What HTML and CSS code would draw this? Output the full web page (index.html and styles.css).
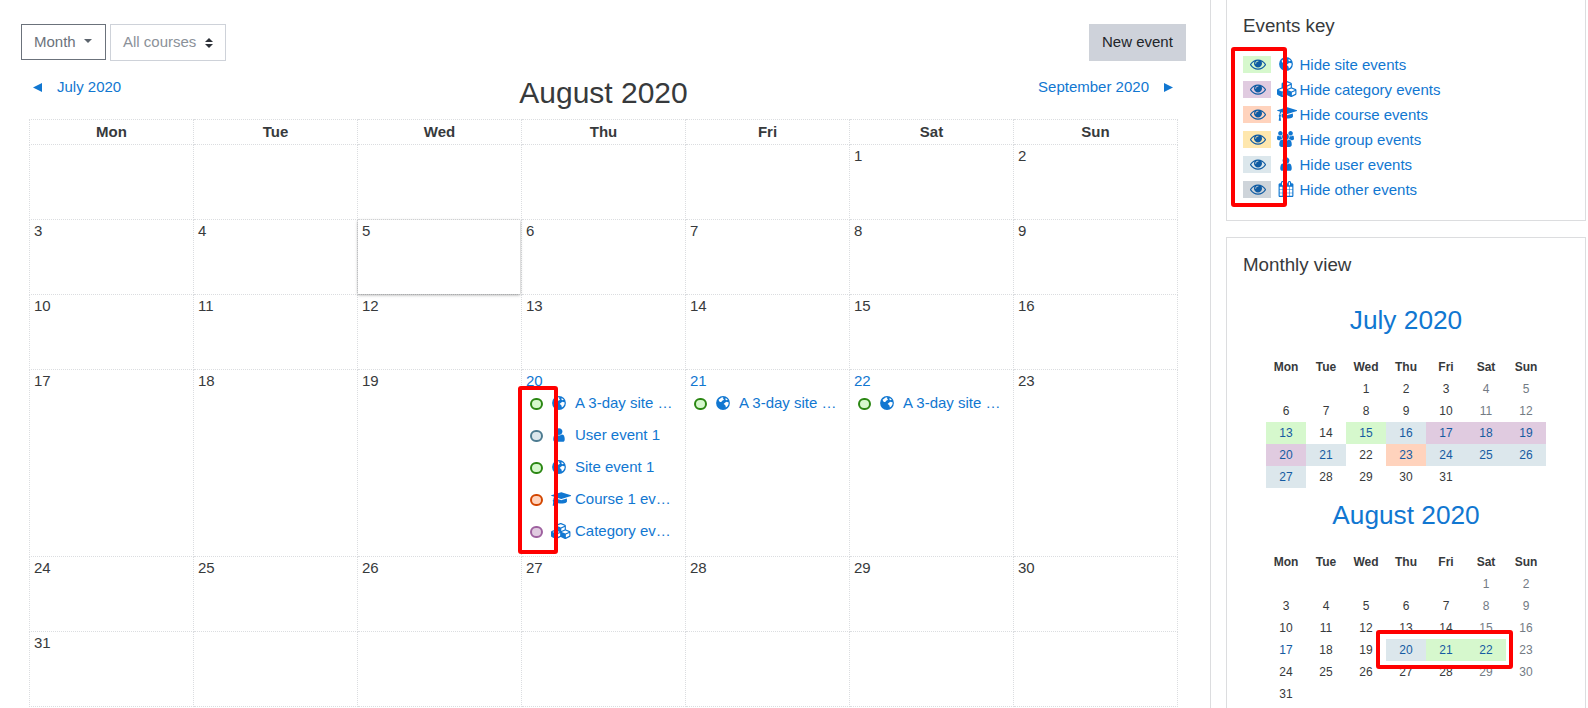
FILE: index.html
```html
<!DOCTYPE html>
<html lang="en">
  <head>
    <meta charset="UTF-8">
    <meta name="viewport" content="width=device-width, initial-scale=1.0">
    <title>Calendar: August 2020</title>
    <link rel="stylesheet" href="styles.css">
  </head>
  <body>
    <svg class="sprite">
      <symbol id="eye" viewBox="0 0 1792 1792"><path d="M1664 960q-152-236-381-353 61 104 61 225 0 185-131.5 316.5t-316.5 131.5-316.5-131.5-131.5-316.5q0-121 61-225-229 117-381 353 133 205 333.5 326.5t434.5 121.5 434.5-121.5 333.5-326.5zm-720-384q0-20-14-34t-34-14q-125 0-214.5 89.5t-89.5 214.5q0 20 14 34t34 14 34-14 14-34q0-86 61-147t147-61q20 0 34-14t14-34zm848 384q0 34-20 69-140 230-376.5 368.5t-499.5 138.5-499.5-139-376.5-368q-20-35-20-69t20-69q140-229 376.5-368t499.5-139 499.5 139 376.5 368q20 35 20 69z"/></symbol>
      <symbol id="globe" viewBox="0 0 16 16"><path fill-rule="evenodd" d="M8 1.1a6.9 6.9 0 1 0 0 13.8a6.9 6.9 0 1 0 0-13.8zM6.6 2.5l1.700-.2-.4 1.200 1 .4-.3 1-1.400.8-.9 1.300-1.200.1-.9-.9-.6-1.500zM10.400 3.200l1.500.5.8 1.100-1.100.4-1.200-.7zM10.200 7.400l1.400-.6 2.100.8-.3 2-1.200 1.900-1.400 1-.2-1.700-1.100-1.200-.9-.7z"/></symbol>
      <symbol id="user" viewBox="0 0 1792 1792"><path d="M1536 1399q0 109-62.5 187t-150.5 78h-854q-88 0-150.5-78t-62.5-187q0-85 8.5-160.5t31.5-152 58.5-131 94-89 134.5-34.5q131 128 313 128t313-128q76 0 134.5 34.5t94 89 58.5 131 31.5 152 8.5 160.5zm-256-887q0 159-112.5 271.5t-271.5 112.5-271.5-112.5-112.5-271.5 112.5-271.5 271.5-112.5 271.5 112.5 112.5 271.5z"/></symbol>
      <symbol id="group" viewBox="64 0 1920 1792"><path d="M657 896q-162 5-265 128h-134q-82 0-138-40.5t-56-118.5q0-353 124-353 6 0 43.5 21t97.5 42.5 119 21.5q67 0 133-23-5 37-5 66 0 139 81 256zm1071 637q0 120-73 189.5t-194 69.5h-874q-121 0-194-69.5t-73-189.5q0-53 3.5-103.5t14-109 26.5-108.5 43-97.5 62-81 85.5-53.5 111.5-20q10 0 43 21.5t73 48 107 48 135 21.5 135-21.5 107-48 73-48 43-21.5q61 0 111.5 20t85.5 53.5 62 81 43 97.5 26.5 108.5 14 109 3.5 103.5zm-1024-1277q0 106-75 181t-181 75-181-75-75-181 75-181 181-75 181 75 75 181zm704 384q0 159-112.5 271.5t-271.5 112.5-271.5-112.5-112.5-271.5 112.5-271.5 271.5-112.5 271.5 112.5 112.5 271.5zm576 225q0 78-56 118.5t-138 40.5h-134q-103-123-265-128 81-117 81-256 0-29-5-66 66 23 133 23 59 0 119-21.5t97.5-42.5 43.5-21q124 0 124 353zm-128-609q0 106-75 181t-181 75-181-75-75-181 75-181 181-75 181 75 75 181z"/></symbol>
      <symbol id="course" viewBox="0 0 2304 1792"><path d="M1774 836l18 316q4 69-82 128t-235 93.5-323 34.5-323-34.5-235-93.5-82-128l18-316 574 181q22 7 48 7t48-7zm530-324q0 23-22 31l-1120 352q-4 1-10 1t-10-1l-652-206q-43 34-71 111.5t-34 178.5q63 36 63 109 0 69-58 107l58 433q2 14-8 25-9 11-24 11h-192q-15 0-24-11-10-11-8-25l58-433q-58-38-58-107 0-73 65-111 11-207 98-330l-333-104q-22-8-22-31t22-31l1120-352q4-1 10-1t10 1l1120 352q22 8 22 31z"/></symbol>
      <symbol id="category" viewBox="0 0 2304 1792"><path d="M640 1632l384-192v-314l-384 164v342zm-64-454l404-173-404-173-404 173zm1088 454l384-192v-314l-384 164v342zm-64-454l404-173-404-173-404 173zm-448-293l384-165v-266l-384 164v267zm-64-379l441-189-441-189-441 189zm1088 518v416q0 36-19 67t-52 47l-448 224q-25 14-57 14t-57-14l-448-224q-5-2-7-4-2 2-7 4l-448 224q-25 14-57 14t-57-14l-448-224q-33-16-52-47t-19-67v-416q0-38 21.5-70t56.5-48l434-186v-400q0-38 21.5-70t56.5-48l448-192q23-10 50-10t50 10l448 192q35 16 56.5 48t21.5 70v400l434 186q36 16 57 48t21 70z"/></symbol>
      <symbol id="other" viewBox="0 0 1792 1792"><path d="M192 1664h288v-288h-288v288zm352 0h320v-288h-320v288zm-352-352h288v-320h-288v320zm352 0h320v-320h-320v320zm-352-384h288v-288h-288v288zm736 736h320v-288h-320v288zm-384-736h320v-288h-320v288zm768 736h288v-288h-288v288zm-384-352h320v-320h-320v320zm-352-864v-288q0-13-9.5-22.5t-22.5-9.5h-64q-13 0-22.5 9.5t-9.5 22.5v288q0 13 9.5 22.5t22.5 9.5h64q13 0 22.5-9.5t9.5-22.5zm736 864h288v-320h-288v320zm-384-384h320v-288h-320v288zm384 0h288v-288h-288v288zm32-480v-288q0-13-9.5-22.5t-22.5-9.5h-64q-13 0-22.5 9.5t-9.5 22.5v288q0 13 9.5 22.5t22.5 9.5h64q13 0 22.5-9.5t9.5-22.5zm384-64v1280q0 52-38 90t-90 38h-1408q-52 0-90-38t-38-90v-1280q0-52 38-90t90-38h128v-96q0-66 47-113t113-47h64q66 0 113 47t47 113v96h384v-96q0-66 47-113t113-47h64q66 0 113 47t47 113v96h128q52 0 90 38t38 90z"/></symbol>
    </svg>
    <div class="page">
      <main>
        <div class="toolbar">
          <button class="view">Month <span class="caret"></span></button>
          <button class="courses">All courses
            <svg class="sort" viewBox="0 0 8 10"><path d="M4 0l4 4H0zM4 10l4-4H0z"/></svg>
          </button>
          <button class="new-event">New event</button>
        </div>
        <div class="month-nav">
          <a href="#"><svg class="arrow" viewBox="0 0 9 9"><path d="M0 4.5L9 0v9z"/></svg>July 2020</a>
          <h2>August 2020</h2>
          <a href="#" class="next">September 2020<svg class="arrow" viewBox="0 0 9 9"><path d="M9 4.5L0 0v9z"/></svg></a>
        </div>
        <table class="month">
          <thead>
            <tr><th>Mon</th><th>Tue</th><th>Wed</th><th>Thu</th><th>Fri</th><th>Sat</th><th>Sun</th></tr>
          </thead>
          <tbody>
            <tr><td></td><td></td><td></td><td></td><td></td><td>1</td><td>2</td></tr>
            <tr><td>3</td><td>4</td><td class="today">5</td><td>6</td><td>7</td><td>8</td><td>9</td></tr>
            <tr><td>10</td><td>11</td><td>12</td><td>13</td><td>14</td><td>15</td><td>16</td></tr>
            <tr class="tall">
              <td>17</td>
              <td>18</td>
              <td>19</td>
              <td class="marked"><a href="#">20</a>
                <ul class="events">
                  <li><span class="dot site"></span><span class="icon"><svg class="i-globe"><use href="#globe"/></svg></span><a href="#">A 3-day site …</a></li>
                  <li><span class="dot user"></span><span class="icon"><svg class="i-eye"><use href="#user"/></svg></span><a href="#">User event 1</a></li>
                  <li><span class="dot site"></span><span class="icon"><svg class="i-globe"><use href="#globe"/></svg></span><a href="#">Site event 1</a></li>
                  <li><span class="dot course"></span><span class="icon"><svg class="i-wide"><use href="#course"/></svg></span><a href="#">Course 1 ev…</a></li>
                  <li><span class="dot category"></span><span class="icon"><svg class="i-wide"><use href="#category"/></svg></span><a href="#">Category ev…</a></li>
                </ul>
                <div class="mark mark-dots"></div>
              </td>
              <td><a href="#">21</a>
                <ul class="events">
                  <li><span class="dot site"></span><span class="icon"><svg class="i-globe"><use href="#globe"/></svg></span><a href="#">A 3-day site …</a></li>
                </ul>
              </td>
              <td><a href="#">22</a>
                <ul class="events">
                  <li><span class="dot site"></span><span class="icon"><svg class="i-globe"><use href="#globe"/></svg></span><a href="#">A 3-day site …</a></li>
                </ul>
              </td>
              <td>23</td>
            </tr>
            <tr><td>24</td><td>25</td><td>26</td><td>27</td><td>28</td><td>29</td><td>30</td></tr>
            <tr><td>31</td><td></td><td></td><td></td><td></td><td></td><td></td></tr>
          </tbody>
        </table>
      </main>
      <aside>
        <section class="card key">
          <h3>Events key</h3>
          <ul>
            <li><span class="swatch site"><svg class="i-eye"><use href="#eye"/></svg></span><span class="icon"><svg class="i-globe"><use href="#globe"/></svg></span><a href="#">Hide site events</a></li>
            <li><span class="swatch category"><svg class="i-eye"><use href="#eye"/></svg></span><span class="icon"><svg class="i-wide"><use href="#category"/></svg></span><a href="#">Hide category events</a></li>
            <li><span class="swatch course"><svg class="i-eye"><use href="#eye"/></svg></span><span class="icon"><svg class="i-wide"><use href="#course"/></svg></span><a href="#">Hide course events</a></li>
            <li><span class="swatch group"><svg class="i-eye"><use href="#eye"/></svg></span><span class="icon"><svg class="i-group"><use href="#group"/></svg></span><a href="#">Hide group events</a></li>
            <li><span class="swatch user"><svg class="i-eye"><use href="#eye"/></svg></span><span class="icon"><svg class="i-eye"><use href="#user"/></svg></span><a href="#">Hide user events</a></li>
            <li><span class="swatch other"><svg class="i-eye"><use href="#eye"/></svg></span><span class="icon"><svg class="i-eye"><use href="#other"/></svg></span><a href="#">Hide other events</a></li>
          </ul>
          <div class="mark mark-key"></div>
        </section>
        <section class="card monthly">
          <h3>Monthly view</h3>
          <h4><a href="#">July 2020</a></h4>
          <table class="mini">
            <tr><th>Mon</th><th>Tue</th><th>Wed</th><th>Thu</th><th>Fri</th><th>Sat</th><th>Sun</th></tr>
            <tr><td></td><td></td><td>1</td><td>2</td><td>3</td><td class="weekend">4</td><td class="weekend">5</td></tr>
            <tr><td>6</td><td>7</td><td>8</td><td>9</td><td>10</td><td class="weekend">11</td><td class="weekend">12</td></tr>
            <tr><td class="site"><a href="#">13</a></td><td>14</td><td class="site"><a href="#">15</a></td><td class="user"><a href="#">16</a></td><td class="category"><a href="#">17</a></td><td class="category"><a href="#">18</a></td><td class="category"><a href="#">19</a></td></tr>
            <tr><td class="category"><a href="#">20</a></td><td class="user"><a href="#">21</a></td><td>22</td><td class="course"><a href="#">23</a></td><td class="user"><a href="#">24</a></td><td class="user"><a href="#">25</a></td><td class="user"><a href="#">26</a></td></tr>
            <tr><td class="user"><a href="#">27</a></td><td>28</td><td>29</td><td>30</td><td>31</td><td></td><td></td></tr>
          </table>
          <h4><a href="#">August 2020</a></h4>
          <table class="mini">
            <tr><th>Mon</th><th>Tue</th><th>Wed</th><th>Thu</th><th>Fri</th><th>Sat</th><th>Sun</th></tr>
            <tr><td></td><td></td><td></td><td></td><td></td><td class="weekend">1</td><td class="weekend">2</td></tr>
            <tr><td>3</td><td>4</td><td>5</td><td>6</td><td>7</td><td class="weekend">8</td><td class="weekend">9</td></tr>
            <tr><td>10</td><td>11</td><td>12</td><td>13</td><td>14</td><td class="weekend">15</td><td class="weekend">16</td></tr>
            <tr><td><a href="#">17</a></td><td>18</td><td>19</td><td class="user marked"><a href="#">20</a><div class="mark mark-days"></div></td><td class="site"><a href="#">21</a></td><td class="site"><a href="#">22</a></td><td class="weekend">23</td></tr>
            <tr><td>24</td><td>25</td><td>26</td><td>27</td><td>28</td><td class="weekend">29</td><td class="weekend">30</td></tr>
            <tr><td>31</td><td></td><td></td><td></td><td></td><td></td><td></td></tr>
          </table>
        </section>
      </aside>
    </div>
  </body>
</html>
```
FILE: styles.css
```css
* {
  box-sizing: border-box;
}
body {
  margin: 0;
  background-color: white;
  color: #373a3c;
  font-family: "Liberation Sans", Arial, sans-serif;
  font-size: 15px;
  line-height: 22px;
}
a {
  color: #1177d1;
  text-decoration: none;
}
ul {
  list-style: none;
  margin: 0;
  padding: 0;
}
h2, h3, h4 {
  margin: 0;
  font-weight: normal;
}
svg {
  fill: currentColor;
  display: block;
  flex: none;
}
.sprite {
  display: none;
}
.page {
  display: flex;
  height: 708px;
}
main {
  width: 1211px;
  flex: none;
  border-right: 1px solid #dcdddf;
  padding: 24px 24px 0 21px;
}

/* toolbar */
.toolbar {
  display: flex;
  align-items: flex-start;
  gap: 4px;
  height: 37px;
}
.toolbar button {
  display: flex;
  align-items: center;
  height: 37px;
  padding: 0 12px 1px;
  font: inherit;
  white-space: nowrap;
  background-color: white;
  border: 1px solid #ced2d9;
}
.toolbar .view {
  width: 85px;
  height: 36px;
  padding-bottom: 0;
  color: #6b727b;
  border-color: #6b727b;
}
.caret {
  margin-left: 8px;
  margin-top: -3px;
  border: 4.5px solid transparent;
  border-top-color: #5c646d;
  border-bottom: 0;
}
.toolbar .courses {
  width: 116px;
  color: #8b9199;
}
.sort {
  width: 8px;
  height: 10px;
  margin-left: 9px;
  margin-top: 2px;
  color: #2d3138;
}
.toolbar .new-event {
  margin-left: auto;
  width: 97px;
  background-color: #ced2da;
  color: #212529;
}

/* month navigation */
.month-nav {
  display: flex;
  justify-content: space-between;
  height: 58px;
  padding: 15px 12px 0;
}
.month-nav a {
  display: flex;
  align-items: center;
  gap: 15px;
  width: 180px;
  height: 22px;
}
.month-nav .next {
  justify-content: flex-end;
  padding-right: 1px;
}
.month-nav h2 {
  font-size: 30px;
  line-height: 34px;
}
.arrow {
  width: 9px;
  height: 9px;
  margin-top: 1px;
}

/* main calendar */
.month {
  width: 1149px;
  margin-left: 8px;
  table-layout: fixed;
  border-collapse: collapse;
}
.month th, .month td {
  border: 1px dotted #dbdde0;
  padding: 0 4px;
  vertical-align: top;
  text-align: left;
}
.month th {
  height: 25px;
  text-align: center;
  line-height: 24px;
}
.month td {
  height: 75px;
}
.month .tall td {
  height: 187px;
}
.month .today {
  position: relative;
}
.today::after {
  content: "";
  position: absolute;
  inset: 0 1px 0 0;
  box-shadow: 0 1px 3px rgba(0, 0, 0, 0.35);
}
.events li {
  display: flex;
  align-items: center;
  height: 22px;
  margin-bottom: 10px;
}
.events a {
  white-space: nowrap;
}
.dot {
  flex: none;
  width: 13px;
  height: 12px;
  margin: 1px 6px 0 4px;
  border: 2px solid;
  border-radius: 6px;
}
.icon {
  display: flex;
  justify-content: center;
  flex: none;
  width: 20px;
  margin-right: 6px;
  color: #1177d1;
}
.i-eye, .i-globe {
  width: 16px;
  height: 16px;
}
.events .i-globe {
  margin-top: -1px;
}
.i-wide {
  width: 20.6px;
  height: 16px;
}
.events .i-wide {
  margin: -1px -4px 0 0;
}
.i-group {
  width: 17px;
  height: 16px;
}

/* event colours */
.site {
  background-color: #d6f8cd;
  border-color: #2b8713;
}
.category {
  background-color: #e0cbe0;
  border-color: #9e619f;
}
.course {
  background-color: #ffd3bd;
  border-color: #d34600;
}
.group {
  background-color: #fee7ae;
}
.user {
  background-color: #dce7ec;
  border-color: #4e7c91;
}
.other {
  background-color: #ced4da;
}

/* sidebar */
aside {
  width: 360px;
  margin-left: 15px;
}
.card {
  border: 1px solid #dcdddf;
  padding: 0 16px;
}
.card h3 {
  font-size: 18.75px;
  line-height: 23px;
}
.key {
  position: relative;
  height: 222px;
  margin-top: -1px;
  margin-bottom: 16px;
  padding-top: 14px;
}
.key ul {
  margin-top: 15px;
}
.key li {
  display: flex;
  align-items: center;
  height: 25px;
}
.key .icon {
  margin: -1px 3.5px 0 5px;
}
.key .i-wide {
  margin-right: -2px;
}
.key .i-globe, .key .icon .i-eye, .key .i-group {
  margin-right: 1px;
}
.swatch {
  display: flex;
  justify-content: center;
  align-items: center;
  width: 28px;
  height: 17px;
  padding: 0 0 1px 1px;
  color: #0f5ba3;
}
.monthly {
  height: 471px;
  padding-top: 15px;
  border-bottom: 0;
}
.monthly h4 {
  font-size: 26.25px;
  line-height: 32px;
  text-align: center;
}
.monthly h3 + h4 {
  margin-top: 28px;
}
.mini {
  width: 280px;
  margin: 20px auto 11px;
  table-layout: fixed;
  border-collapse: collapse;
  font-size: 12px;
  text-align: center;
}
.mini th, .mini td {
  height: 22px;
  padding: 0;
  line-height: 18px;
}
.mini a {
  color: #155ba2;
}
.mini .weekend {
  color: #737b84;
}

/* red highlight frames */
.marked {
  position: relative;
}
.mark {
  position: absolute;
  border: 4px solid #ff0000;
  border-radius: 3px;
}
.mark-dots {
  left: -4px;
  top: 16px;
  width: 40px;
  height: 168px;
}
.mark-key {
  left: 4px;
  top: 47px;
  width: 56px;
  height: 160px;
}
.mark-days {
  left: -10px;
  top: -9px;
  width: 137px;
  height: 39px;
}
```
